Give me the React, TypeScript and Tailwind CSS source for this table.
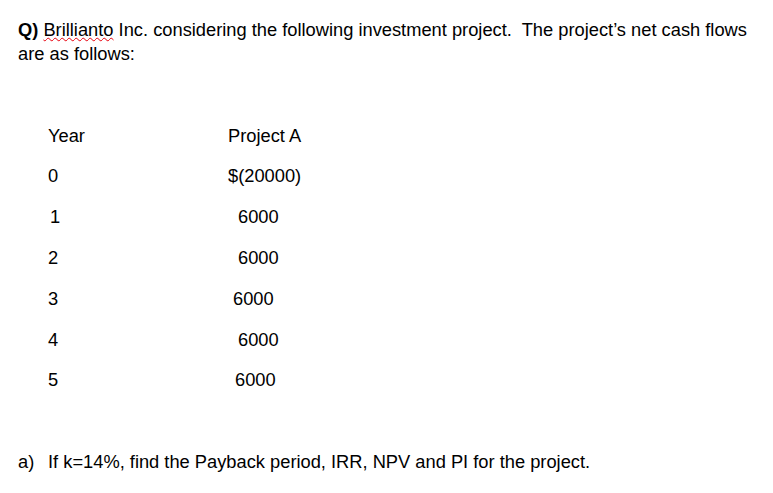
export default function App() {
  const rows = [
    { year: '0', yearPad: 'pl-0', cash: '$(20000)', cashPad: 'pl-0' },
    { year: '1', yearPad: 'pl-[2px]', cash: '6000', cashPad: 'pl-[10px]' },
    { year: '2', yearPad: 'pl-0', cash: '6000', cashPad: 'pl-[10px]' },
    { year: '3', yearPad: 'pl-0', cash: '6000', cashPad: 'pl-[5px]' },
    { year: '4', yearPad: 'pl-0', cash: '6000', cashPad: 'pl-[10px]' },
    { year: '5', yearPad: 'pl-0', cash: '6000', cashPad: 'pl-[7px]' },
  ];

  return (
    <div className="w-[773px] h-[493px] bg-white text-black font-['Liberation_Sans',Arial,sans-serif] text-[18.3px] leading-[24px] overflow-hidden">
      <div className="pt-[18px] pl-[18px]">
        <p className="whitespace-nowrap">
          <span className="font-bold">Q)</span>{' '}
          <span className="underline decoration-wavy decoration-red-600 decoration-1 underline-offset-[1px]">Brillianto</span>{' '}
          Inc. considering the following investment project.&nbsp; The project’s net cash flows
          <br />
          are as follows:
        </p>
      </div>

      <div className="mt-[49px] pl-[48px]">
        <div className="flex h-[41px] items-center">
          <div className="w-[180px]">Year</div>
          <div>Project A</div>
        </div>
        {rows.map((r) => (
          <div key={r.year} className="flex h-[40.8px] items-center">
            <div className={`w-[180px] ${r.yearPad}`}>{r.year}</div>
            <div className={r.cashPad}>{r.cash}</div>
          </div>
        ))}
      </div>

      <div className="mt-[49px] pl-[18px] flex">
        <span className="w-[30px]">a)</span>
        <span>If k=14%, find the Payback period, IRR, NPV and PI for the project.</span>
      </div>
    </div>
  );
}
